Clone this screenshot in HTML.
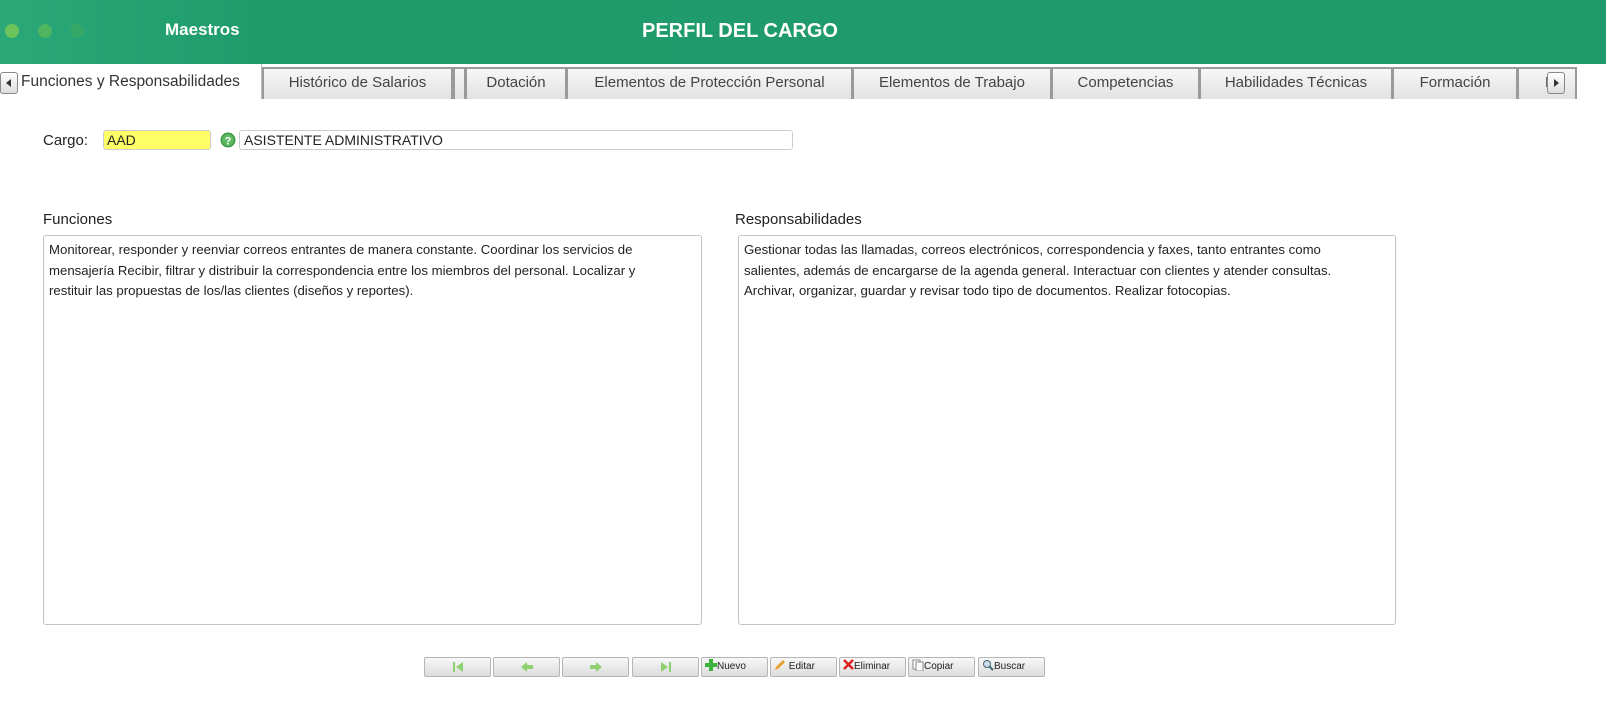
<!DOCTYPE html>
<html><head><meta charset="utf-8"><style>
*{box-sizing:border-box;margin:0;padding:0}
body{width:1606px;height:725px;background:#fff;font-family:"Liberation Sans",sans-serif;position:relative;overflow:hidden;color:#222}
.hdr{position:absolute;left:0;top:0;width:1606px;height:64px;background:linear-gradient(90deg,#2ba878 0px,#1f9b6c 260px,#1e9a6b 100%)}
.dot{position:absolute;top:24px;width:14px;height:14px;border-radius:50%}
.t1{position:absolute;left:165px;top:20px;color:#fff;font-weight:bold;font-size:17px}
.t2{position:absolute;left:642px;top:20px;color:#fff;font-weight:bold;font-size:20px}
.tabs{position:absolute;left:0;top:64px;width:1606px;height:35px;background:#fff}
.tab{position:absolute;top:3px;height:32px;border:2px solid #9a9a9a;border-bottom:none;background:linear-gradient(#f7f7f7,#e2e2e2);font-size:15px;color:#444;text-align:center;line-height:28px;white-space:nowrap;overflow:hidden}
.act{position:absolute;left:0;top:0;width:262px;height:35px;background:#fff;font-size:15.5px;color:#333;line-height:36px;padding-left:21px;border-right:1px solid #bbb;white-space:nowrap}
.arr{position:absolute;top:8px;width:18px;height:22px;border:1px solid #888;border-radius:3px;background:linear-gradient(#fff,#ddd)}
.lbl{position:absolute;font-size:15px;color:#222}
.ta{position:absolute;top:235px;height:390px;border:1px solid #c4c4c4;border-radius:3px;font-size:13.2px;line-height:20.5px;padding:4px 5px;color:#222;white-space:nowrap}
.btn{position:absolute;top:657px;height:20px;width:67px;border:1px solid #b5b5b5;border-radius:2px;background:linear-gradient(#f8f8f8,#dcdcdc);font-size:10px;color:#222;line-height:18px;padding-left:3px}
</style></head><body>
<div class="hdr">
<div class="dot" style="left:5px;background:#6cc45a"></div>
<div class="dot" style="left:38px;background:#4fb560"></div>
<div class="dot" style="left:70px;background:#35a868"></div>
<div class="t1">Maestros</div>
<div class="t2">PERFIL DEL CARGO</div>
</div>
<div class="tabs">
<div class="act">Funciones y Responsabilidades</div>
<div class="arr" style="left:0;"><svg width="16" height="20"><path d="M10 6 L5 10 L10 14Z" fill="#333"/></svg></div>
<div class="tab" style="left:262px;width:191px">Histórico de Salarios</div>
<div class="tab" style="left:453px;width:13px"></div>
<div class="tab" style="left:465px;width:102px">Dotación</div>
<div class="tab" style="left:566px;width:287px">Elementos de Protección Personal</div>
<div class="tab" style="left:852px;width:200px">Elementos de Trabajo</div>
<div class="tab" style="left:1051px;width:149px">Competencias</div>
<div class="tab" style="left:1199px;width:194px">Habilidades Técnicas</div>
<div class="tab" style="left:1392px;width:126px">Formación</div>
<div class="tab" style="left:1517px;width:60px;text-align:left;padding-left:26px">E</div>
<div class="arr" style="left:1547px"><svg width="16" height="20"><path d="M6 6 L11 10 L6 14Z" fill="#333"/></svg></div>
</div>
<div class="lbl" style="left:43px;top:132px">Cargo:</div>
<div style="position:absolute;left:103px;top:130px;width:108px;height:20px;background:#ffff66;border:1px solid #ccc;border-radius:3px;font-size:14px;padding-left:3px;line-height:19px">AAD</div>
<svg style="position:absolute;left:220px;top:132px" width="16" height="16"><circle cx="8" cy="8" r="7.5" fill="#3a9a45"/><circle cx="8" cy="8" r="6" fill="#5cb860"/><text x="8" y="12.5" font-size="11" font-weight="bold" fill="#fff" text-anchor="middle" font-family="Liberation Sans">?</text></svg>
<div style="position:absolute;left:239px;top:130px;width:554px;height:20px;border:1px solid #ccc;border-radius:3px;font-size:14px;padding-left:4px;line-height:19px">ASISTENTE ADMINISTRATIVO</div>
<div class="lbl" style="left:43px;top:211px">Funciones</div>
<div class="lbl" style="left:735px;top:211px">Responsabilidades</div>
<div class="ta" style="left:43px;width:659px">Monitorear, responder y reenviar correos entrantes de manera constante. Coordinar los servicios de<br>mensajería Recibir, filtrar y distribuir la correspondencia entre los miembros del personal. Localizar y<br>restituir las propuestas de los/las clientes (diseños y reportes).</div>
<div class="ta" style="left:738px;width:658px">Gestionar todas las llamadas, correos electrónicos, correspondencia y faxes, tanto entrantes como<br>salientes, además de encargarse de la agenda general. Interactuar con clientes y atender consultas.<br>Archivar, organizar, guardar y revisar todo tipo de documentos. Realizar fotocopias.</div>
<div class="btn" style="left:424px;text-align:center;padding:0"><svg width="14" height="14" style="margin-top:2px"><rect x="2" y="2" width="2" height="10" fill="#8fd070"/><path d="M12 2 L5 7 L12 12Z" fill="#8fd070"/></svg></div>
<div class="btn" style="left:493px;text-align:center;padding:0"><svg width="14" height="14" style="margin-top:2px"><path d="M1 7 L7 2 V5 H13 V9 H7 V12Z" fill="#8fd070"/></svg></div>
<div class="btn" style="left:562px;text-align:center;padding:0"><svg width="14" height="14" style="margin-top:2px"><path d="M13 7 L7 2 V5 H1 V9 H7 V12Z" fill="#8fd070"/></svg></div>
<div class="btn" style="left:632px;text-align:center;padding:0"><svg width="14" height="14" style="margin-top:2px"><rect x="10" y="2" width="2" height="10" fill="#8fd070"/><path d="M2 2 L9 7 L2 12Z" fill="#8fd070"/></svg></div>
<div class="btn" style="left:701px"><svg width="12" height="12" style="vertical-align:-2px"><path d="M4 0H8V4H12V8H8V12H4V8H0V4H4Z" fill="#3cb43c"/></svg>Nuevo</div>
<div class="btn" style="left:770px"><svg width="12" height="12" style="vertical-align:-2px"><path d="M1 11 L2 8 L9 1 L11 3 L4 10Z" fill="#e8a030"/></svg> Editar</div>
<div class="btn" style="left:839px"><svg width="11" height="11" style="vertical-align:-1px"><path d="M1 1L10 10M10 1L1 10" stroke="#e02020" stroke-width="2.5"/></svg>Eliminar</div>
<div class="btn" style="left:908px"><svg width="12" height="12" style="vertical-align:-2px"><rect x="1" y="1" width="7" height="9" fill="#fff" stroke="#888"/><rect x="4" y="3" width="7" height="9" fill="#fff" stroke="#888"/></svg>Copiar</div>
<div class="btn" style="left:978px"><svg width="12" height="12" style="vertical-align:-2px"><circle cx="5" cy="5" r="3.5" fill="#cde" stroke="#467"/><path d="M7.5 7.5L11 11" stroke="#467" stroke-width="2"/></svg>Buscar</div>
</body></html>
